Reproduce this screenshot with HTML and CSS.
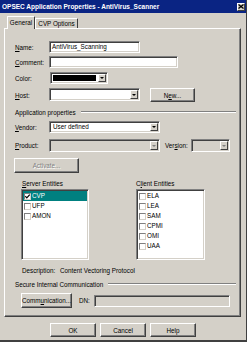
FILE: index.html
```html
<!DOCTYPE html>
<html>
<head>
<meta charset="utf-8">
<link rel="stylesheet" href="styles.css">
</head>
<body>
<div class="win">
  <div class="title">
    <span class="ttext">OPSEC Application Properties - AntiVirus_Scanner</span>
    <span class="close"><svg width="6" height="5" viewBox="0 0 6 5"><path d="M0.5 0.5 L5.5 4.5 M5.5 0.5 L0.5 4.5" stroke="#000" stroke-width="1.3"/></svg></span>
  </div>
  <div class="tabs">
    <div class="tab sel">General</div>
    <div class="tab">CVP Options</div>
  </div>
  <div class="panel">
    <div class="row r-name">
      <span class="lbl"><u>N</u>ame:</span>
      <div class="field w-name">AntiVirus_Scanning</div>
    </div>
    <div class="row r-comment">
      <span class="lbl"><u>C</u>omment:</span>
      <div class="field w-comment"></div>
    </div>
    <div class="row r-color">
      <span class="lbl lbl-color">Color:</span>
      <div class="field combo w-color"><span class="swatch"></span><span class="arrow"></span></div>
    </div>
    <div class="row r-host">
      <span class="lbl"><u>H</u>ost:</span>
      <div class="field combo w-host"><span class="fill"></span><span class="arrow"></span></div>
      <div class="btn b-new">N<u>e</u>w...</div>
    </div>
    <div class="row r-sect">
      <span class="sect-text">Application properties</span>
      <span class="etch"></span>
    </div>
    <div class="row r-vendor">
      <span class="lbl"><u>V</u>endor:</span>
      <div class="field combo w-vendor"><span class="fill">User defined</span><span class="arrow"></span></div>
    </div>
    <div class="row r-product">
      <span class="lbl"><u>P</u>roduct:</span>
      <div class="field combo dis w-product"><span class="fill"></span><span class="arrow dis-arrow"></span></div>
      <span class="lbl-ver">Ver<u>s</u>ion:</span>
      <div class="field combo dis w-version"><span class="fill"></span><span class="arrow dis-arrow"></span></div>
    </div>
    <div class="row r-activate">
      <div class="btn dis-btn b-activate">Activate...</div>
    </div>
    <div class="row r-entl">
      <span class="ent-lbl ent-server"><u>S</u>erver Entities</span>
      <span class="ent-lbl ent-client">C<u>l</u>ient Entities</span>
    </div>
    <div class="row r-lists">
      <div class="list l-server">
        <div class="item hi"><span class="cb"><svg width="5" height="5" viewBox="0 0 5 5"><path d="M0.3 2.2 L1.8 3.8 L4.7 0.6" stroke="#000" stroke-width="1.2" fill="none"/></svg></span>CVP</div>
        <div class="item"><span class="cb"></span>UFP</div>
        <div class="item"><span class="cb"></span>AMON</div>
      </div>
      <div class="list l-client">
        <div class="item"><span class="cb"></span>ELA</div>
        <div class="item"><span class="cb"></span>LEA</div>
        <div class="item"><span class="cb"></span>SAM</div>
        <div class="item"><span class="cb"></span>CPMI</div>
        <div class="item"><span class="cb"></span>OMI</div>
        <div class="item"><span class="cb"></span>UAA</div>
      </div>
    </div>
    <div class="row r-desc">
      <span class="desc-lbl">Description:</span>
      <span class="desc-val">Content Vectoring Protocol</span>
    </div>
    <div class="row r-sect2">
      <span class="sect-text">Secure Internal Communication</span>
      <span class="etch"></span>
    </div>
    <div class="row r-comm">
      <div class="btn b-comm">Comm<u>u</u>nication...</div>
      <span class="dn-lbl">DN:</span>
      <div class="field dis w-dn"></div>
    </div>
  </div>
  <div class="btnrow">
    <div class="btn b-dlg">OK</div>
    <div class="btn b-dlg">Cancel</div>
    <div class="btn b-dlg">Help</div>
  </div>
</div>
</body>
</html>
```

FILE: styles.css
```css
* { box-sizing: border-box; }
html, body { margin: 0; padding: 0; background: #d4d0c8; }
body {
  font-family: "Liberation Sans", Arial, sans-serif;
  font-size: 6.3px;
  color: #000;
}
u { text-decoration: underline; text-underline-offset: 1px; }

.win {
  width: 247px;
  height: 342px;
  background: #d4d0c8;
  border-right: 1px solid #404040;
  border-bottom: 2px solid #404040;
  overflow: hidden;
}

.title {
  height: 13px;
  background: #0a2483;
  color: #fff;
  font-weight: bold;
  font-size: 6.5px;
  display: flex;
  align-items: center;
  justify-content: space-between;
  padding: 0 1px 0 2px;
}
.ttext { line-height: 13px; white-space: nowrap; }
.close {
  width: 8px;
  height: 8px;
  background: #d4d0c8;
  border-top: 1px solid #fff;
  border-left: 1px solid #fff;
  border-right: 1px solid #404040;
  border-bottom: 1px solid #404040;
  display: flex;
  align-items: center;
  justify-content: center;
}

.tabs {
  display: flex;
  align-items: flex-end;
  height: 15px;
  margin-left: 7px;
}
.tab {
  height: 10px;
  padding: 0;
  line-height: 9px;
  border-top: 1px solid #fff;
  border-left: 1px solid #fff;
  border-right: 1px solid #404040;
  border-radius: 1px 1px 0 0;
  width: 43px;
  text-align: center;
  white-space: nowrap;
}
.tab.sel {
  height: 13px;
  width: 28px;
  line-height: 11px;
  position: relative;
  z-index: 1;
  margin-bottom: -1px;
  background: #d4d0c8;
}

.panel {
  margin-left: 4px;
  width: 237px;
  height: 289px;
  border-top: 1px solid #fff;
  border-left: 1px solid #fff;
  border-right: 1px solid #404040;
  border-bottom: 1px solid #404040;
  box-shadow: inset -1px -1px 0 #808080;
}

.row {
  display: flex;
  align-items: center;
  padding-left: 10px;
  white-space: nowrap;
}
.lbl { width: 34px; flex: none; }
.lbl-color { width: 35px; }

.field {
  height: 12px;
  background: #fff;
  border-top: 1px solid #808080;
  border-left: 1px solid #808080;
  border-right: 1px solid #fff;
  border-bottom: 1px solid #fff;
  box-shadow: inset 1px 1px 0 #404040, inset -1px -1px 0 #d4d0c8;
  padding-left: 2px;
  line-height: 10px;
  flex: none;
  white-space: nowrap;
}
.field.dis { background: #d4d0c8; }
.combo {
  display: flex;
  align-items: stretch;
  padding: 1px;
}
.combo .fill { flex: 1; padding-left: 2px; line-height: 8px; }
.arrow {
  width: 8px;
  flex: none;
  background: #d4d0c8;
  border-top: 1px solid #fff;
  border-left: 1px solid #fff;
  border-right: 1px solid #404040;
  border-bottom: 1px solid #404040;
  display: flex;
  align-items: center;
  justify-content: center;
}
.arrow::after {
  content: "";
  border-left: 2px solid transparent;
  border-right: 2px solid transparent;
  border-top: 2px solid #000;
}
.dis-arrow::after { border-top-color: #808080; }
.swatch { flex: 1; background: #000; margin: 1px 2px 1px 1px; }

.r-name { margin-top: 12px; height: 12px; }
.w-name { width: 91px; }
.r-comment { margin-top: 3px; height: 12px; }
.w-comment { width: 129px; }
.r-color { margin-top: 4px; height: 12px; }
.w-color { width: 58px; }
.r-host { margin-top: 4px; height: 14px; }
.w-host { width: 91px; height: 13px; align-self: flex-start; }
.btn {
  background: #d4d0c8;
  border-top: 1px solid #fff;
  border-left: 1px solid #fff;
  border-right: 1px solid #404040;
  border-bottom: 1px solid #404040;
  box-shadow: inset -1px -1px 0 #808080;
  display: flex;
  align-items: center;
  justify-content: center;
  flex: none;
  white-space: nowrap;
}
.b-new { width: 45px; height: 14px; margin-left: 10px; }

.r-sect { margin-top: 5px; height: 10px; padding-left: 10px; padding-right: 4px; }
.sect-text { flex: none; margin-right: 5px; }
.etch {
  flex: 1;
  height: 2px;
  border-top: 1px solid #808080;
  border-bottom: 1px solid #fff;
}

.r-vendor { margin-top: 4px; height: 12px; }
.w-vendor { width: 111px; }
.r-product { margin-top: 6px; height: 13px; }
.w-product { width: 111px; height: 13px; }
.lbl-ver { margin-left: 5px; width: 26px; flex: none; }
.w-version { width: 39px; height: 13px; }

.r-activate { margin-top: 6px; height: 15px; padding-left: 9px; }
.b-activate { width: 65px; height: 15px; }
.dis-btn { color: #808080; text-shadow: 1px 1px 0 #fff; }

.r-entl { margin-top: 5px; height: 10px; padding-left: 17px; }
.ent-lbl { flex: none; }
.ent-server { width: 114px; }

.r-lists { margin-top: 1px; height: 71px; align-items: stretch; padding-left: 16px; }
.list {
  background: #fff;
  border-top: 1px solid #808080;
  border-left: 1px solid #808080;
  border-right: 1px solid #fff;
  border-bottom: 1px solid #fff;
  box-shadow: inset 1px 1px 0 #404040, inset -1px -1px 0 #d4d0c8;
  padding: 1px 1px 0 1px;
  flex: none;
}
.l-server { width: 68px; }
.l-client { width: 69px; margin-left: 47px; }
.item {
  height: 10px;
  display: flex;
  align-items: center;
  padding-left: 1px;
  line-height: 10px;
}
.item.hi { background: #008080; color: #fff; }
.cb {
  width: 7px;
  height: 7px;
  background: #fff;
  border-top: 1px solid #808080;
  border-left: 1px solid #808080;
  border-right: 1px solid #d4d0c8;
  border-bottom: 1px solid #d4d0c8;
  margin-right: 1px;
  display: flex;
  align-items: center;
  justify-content: center;
  flex: none;
}

.r-desc { margin-top: 5px; height: 10px; padding-left: 17px; }
.desc-lbl { width: 38px; flex: none; }

.r-sect2 { margin-top: 4px; height: 10px; padding-left: 10px; padding-right: 4px; }

.r-comm { margin-top: 4px; height: 15px; padding-left: 16px; }
.b-comm { width: 51px; height: 15px; }
.dn-lbl { margin-left: 7px; width: 15px; flex: none; }
.w-dn { width: 136px; height: 12px; }

.btnrow {
  display: flex;
  margin-top: 6px;
  padding-left: 50px;
  gap: 4px;
}
.b-dlg { width: 46px; height: 14px; }
```
